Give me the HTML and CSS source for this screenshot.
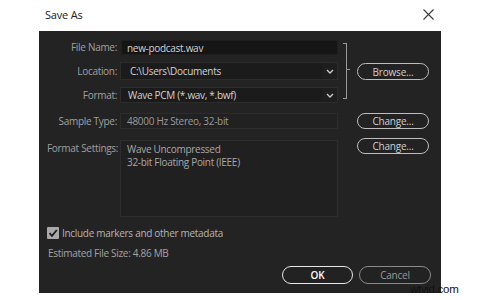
FILE: index.html
```html
<!DOCTYPE html>
<html>
<head>
<meta charset="utf-8">
<link rel="stylesheet" href="styles.css">
</head>
<body>
<div class="titlebar">
  <span class="title">Save As</span>
  <svg class="close" width="11" height="11" viewBox="0 0 11 11"><path d="M0.5 0.5 L10.5 10.5 M10.5 0.5 L0.5 10.5" stroke="#3a3a3a" stroke-width="1.1" fill="none"/></svg>
</div>
<div class="panel">
  <div class="form">
    <div class="label r1">File Name:</div>
    <div class="field input r1">new-podcast.wav</div>
    <div class="bracket"><span class="tick"></span></div>

    <div class="label r2">Location:</div>
    <div class="field select r2 loc">C:\Users\Documents<span class="chev"><svg width="8" height="5" viewBox="0 0 8 5"><path d="M1 1 L4 4 L7 1" stroke="#d0d0d0" stroke-width="1.3" fill="none"/></svg></span></div>
    <button class="btn r2 browse">Browse...</button>

    <div class="label r3">Format:</div>
    <div class="field select r3 fmt">Wave PCM (*.wav, *.bwf)<span class="chev"><svg width="8" height="5" viewBox="0 0 8 5"><path d="M1 1 L4 4 L7 1" stroke="#d0d0d0" stroke-width="1.3" fill="none"/></svg></span></div>

    <div class="label r4">Sample Type:</div>
    <div class="field ro r4">48000 Hz Stereo, 32-bit</div>
    <button class="btn r4 change1">Change...</button>

    <div class="label r5 top">Format Settings:</div>
    <div class="field area r5">Wave Uncompressed<br>32-bit Floating Point (IEEE)</div>
    <button class="btn r5 change2">Change...</button>
  </div>
  <label class="check">
    <span class="box"><svg width="12" height="12" viewBox="0 0 12 12"><path d="M2.5 6.2 L5 8.8 L9.8 3" stroke="#1c1c1c" stroke-width="1.8" fill="none"/></svg></span>
    <span>Include markers and other metadata</span>
  </label>
  <div class="size">Estimated File Size: 4.86 MB</div>
  <div class="actions">
    <button class="btn ok">OK</button>
    <button class="btn cancel">Cancel</button>
  </div>
</div>
<div class="watermark">wtvid.com</div>
</body>
</html>
```
FILE: styles.css
```css
html, body {
  margin: 0;
  padding: 0;
  background: #ffffff;
  width: 480px;
  height: 300px;
  overflow: hidden;
  font-family: "Open Sans", "Noto Sans", sans-serif;
}
.titlebar {
  height: 31px;
  display: flex;
  align-items: center;
  justify-content: space-between;
  padding: 0 46px 2px 45px;
  box-sizing: border-box;
}
.title {
  font-size: 11px;
  color: #222;
  letter-spacing: -0.2px;
}
.close {
  display: block;
}
.panel {
  margin-left: 39px;
  width: 402px;
  height: 262px;
  background: #232323;
  box-sizing: border-box;
  padding: 9px 10px 10px 8px;
  font-size: 10px;
  letter-spacing: -0.3px;
  color: #a3a3a3;
}
.form {
  display: grid;
  grid-template-columns: 73px 218px 19px 72px;
  grid-template-rows: 22px 25px 26px 25px 79px;
  align-items: start;
}
.label {
  grid-column: 1;
  text-align: right;
  padding-right: 3px;
  color: #a0a0a0;
  white-space: nowrap;
}
.r1 { grid-row: 1; }
.r2 { grid-row: 2; }
.r3 { grid-row: 3; }
.r4 { grid-row: 4; }
.r5 { grid-row: 5; }
.label.r1 { line-height: 15px; }
.label.r2 { line-height: 18px; }
.label.r3 { line-height: 16px; }
.label.r4 { line-height: 16px; }
.label.top { line-height: 13px; margin-top: 4px; }
.field {
  grid-column: 2;
  box-sizing: border-box;
  color: #d2d2d2;
  white-space: nowrap;
}
.input {
  height: 15px;
  line-height: 14px;
  background: #151515;
  border: 1px solid #1f1f1f;
  padding-left: 5px;
  margin-left: 1px;
}
.select {
  position: relative;
  background: #1b1b1b;
  border: 1px solid #2c2c2c;
  padding-left: 9px;
}
.loc { height: 18px; line-height: 16px; }
.fmt { height: 16px; line-height: 14px; padding-left: 7px; }
.chev {
  position: absolute;
  right: 0;
  top: 0;
  bottom: 0;
  width: 15px;
  display: flex;
  align-items: center;
  justify-content: center;
  background: #1e1e1e;
}
.chev svg { display: block; }
.ro {
  height: 16px;
  line-height: 14px;
  border: 1px solid #2d2d2d;
  background: #212121;
  color: #9a9a9a;
  padding-left: 6px;
}
.area {
  margin-top: 2px;
  height: 77px;
  border: 1px solid #2d2d2d;
  background: #202020;
  color: #a8a8a8;
  line-height: 13px;
  padding: 2px 6px;
}
.bracket {
  grid-column: 3;
  grid-row: 1 / 4;
  margin-top: 3px;
  margin-left: 5px;
  width: 3px;
  height: 54px;
  border: 1.5px solid #9a9a9a;
  border-left: none;
  position: relative;
}
.tick {
  position: absolute;
  left: 3px;
  top: 24.5px;
  width: 4px;
  height: 0;
  border-top: 1.5px solid #9a9a9a;
}
.btn {
  font-family: "Open Sans", "Noto Sans", sans-serif;
  font-size: 10px;
  letter-spacing: -0.2px;
  background: #222;
  border: 1.5px solid #bdbdbd;
  border-radius: 9px;
  color: #cfcfcf;
  padding: 0;
  margin: 0;
  box-sizing: border-box;
  cursor: default;
}
.form .btn { grid-column: 4; width: 72px; }
.browse { height: 17px; margin-top: 1px; }
.change1 { height: 16px; }
.change2 { height: 16px; }
.check {
  display: flex;
  align-items: center;
  gap: 3px;
  margin-top: 10px;
  height: 12px;
  color: #b5b5b5;
}
.box {
  width: 12px;
  height: 12px;
  background: #a9a9a9;
  border-radius: 1px;
  display: block;
}
.box svg { display: block; }
.size {
  margin-top: 8px;
  line-height: 13px;
  color: #a3a3a3;
  padding-left: 1px;
}
.actions {
  display: flex;
  justify-content: flex-end;
  gap: 6px;
  margin-top: 6px;
}
.ok {
  width: 71px;
  height: 18px;
  border-color: #e8e8e8;
  color: #ffffff;
  font-weight: 600;
}
.cancel {
  width: 72px;
  height: 18px;
  border-color: #8a8a8a;
  color: #9a9a9a;
}
.watermark {
  position: absolute;
  left: 410px;
  top: 283px;
  font-family: "Liberation Sans", Arial, sans-serif;
  font-size: 11.5px;
  color: #111;
  letter-spacing: -0.3px;
}
```
